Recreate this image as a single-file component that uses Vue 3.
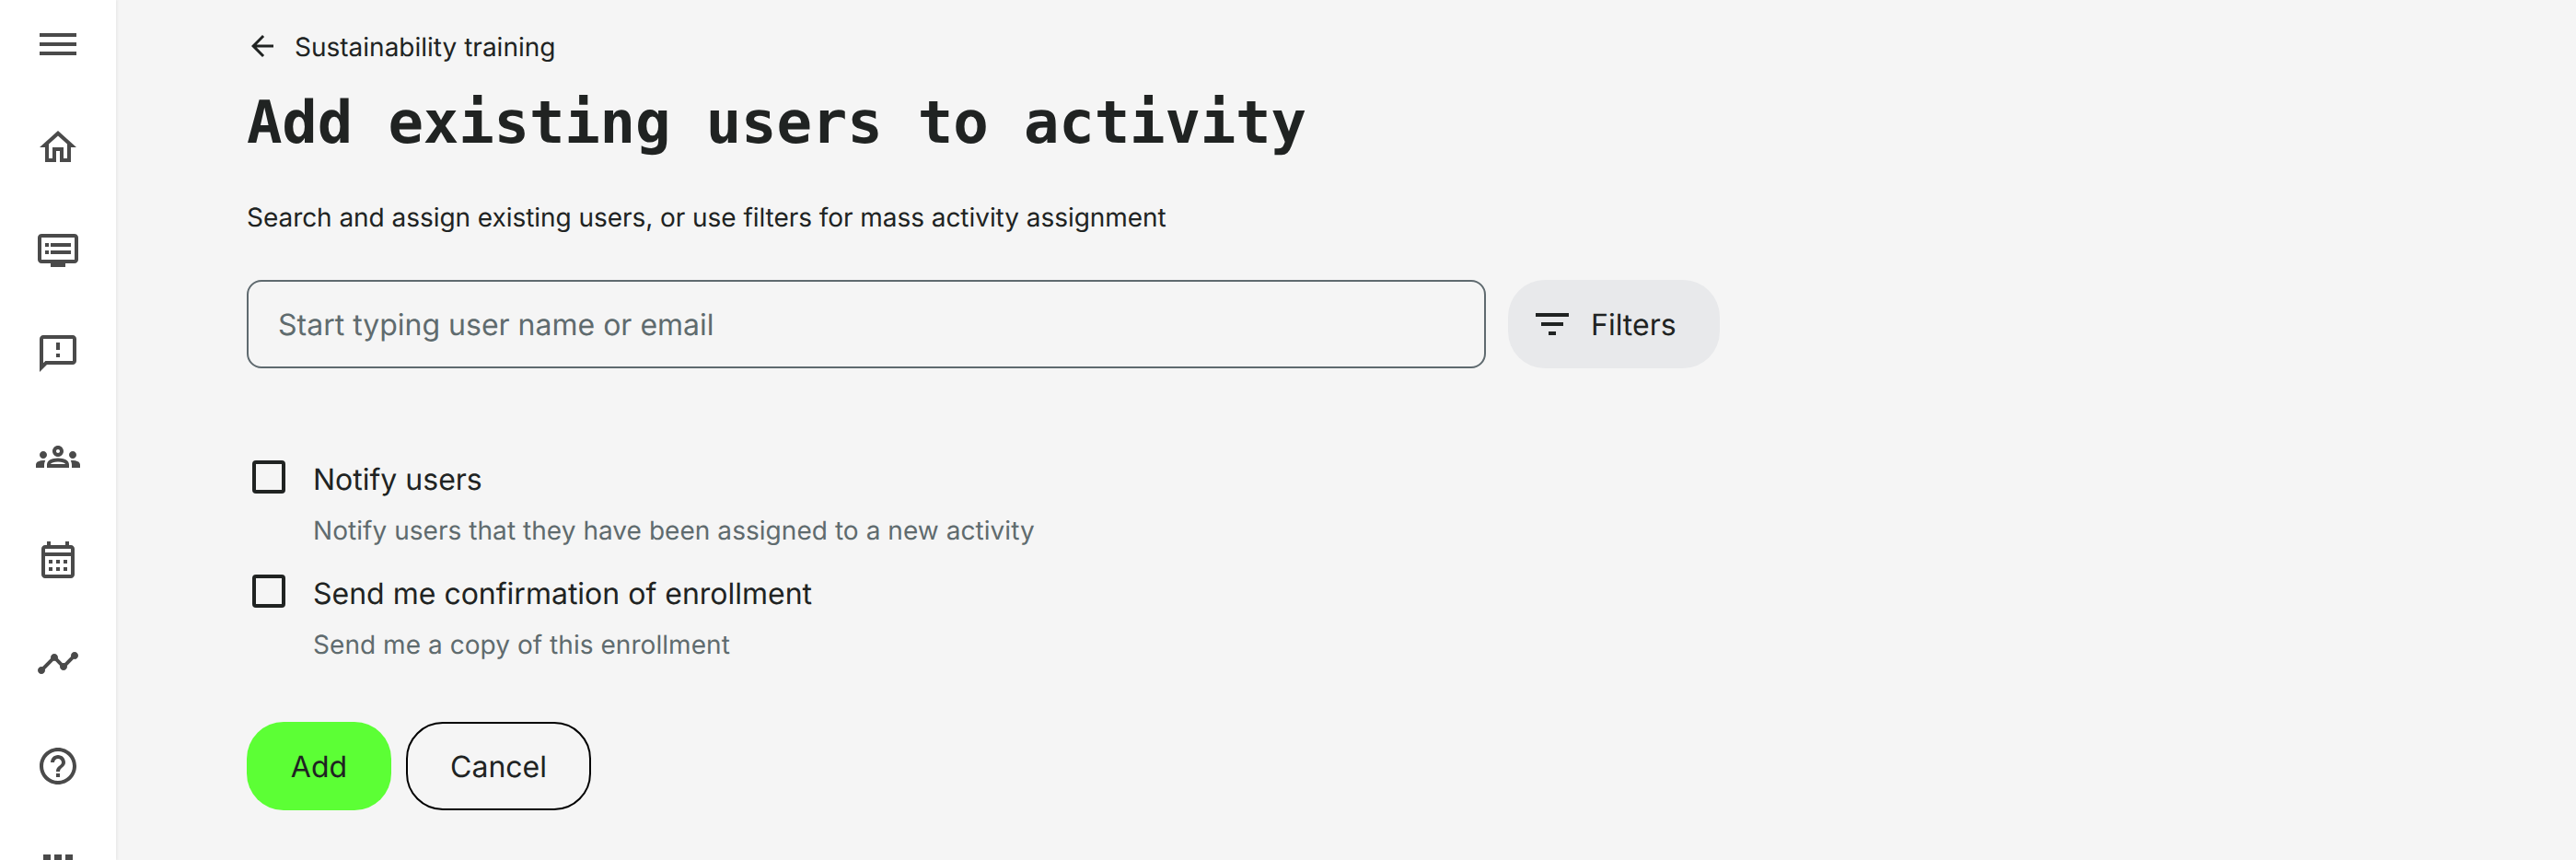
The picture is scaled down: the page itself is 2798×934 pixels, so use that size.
<script setup>
const navIcons = [
  'M2 6h20v2H2V6zm0 5h20v2H2v-2zm0 5h20v2H2v-2z',
  'M12 5.69l5 4.5V18h-2v-6H9v6H7v-7.81l5-4.5M12 3L2 12h3v8h6v-6h2v6h6v-8h3L12 3z',
  'M21 3H3c-1.1 0-2 .9-2 2v12c0 1.1.9 2 2 2h5v2h8v-2h5c1.1 0 2-.9 2-2V5c0-1.1-.9-2-2-2zm0 14H3V5h18v12zm-2-9H8v2h11V8zm0 4H8v2h11v-2zM7 8H5v2h2V8zm0 4H5v2h2v-2z',
  'M20 2H4c-1.1 0-1.99.9-1.99 2L2 22l4-4h14c1.1 0 2-.9 2-2V4c0-1.1-.9-2-2-2zm0 14H5.17L4 17.17V4h16v12zm-9-4h2v2h-2zm0-6h2v4h-2z',
  'M4 13c1.1 0 2-.9 2-2s-.9-2-2-2-2 .9-2 2 .9 2 2 2zm1.13 1.1c-.37-.06-.74-.1-1.13-.1-.99 0-1.93.21-2.78.58C.48 14.9 0 15.62 0 16.43V18h4.5v-1.61c0-.83.23-1.61.63-2.29zM20 13c1.1 0 2-.9 2-2s-.9-2-2-2-2 .9-2 2 .9 2 2 2zm4 3.43c0-.81-.48-1.53-1.22-1.85-.85-.37-1.79-.58-2.78-.58-.39 0-.76.04-1.13.1.4.68.63 1.46.63 2.29V18H24v-1.57zm-7.76-2.78c-1.17-.52-2.61-.9-4.24-.9-1.63 0-3.07.39-4.24.9C6.68 14.13 6 15.21 6 16.39V18h12v-1.61c0-1.18-.68-2.26-1.76-2.74zM8.07 16c.09-.23.13-.39.91-.69.97-.38 1.99-.56 3.02-.56s2.05.18 3.02.56c.77.3.81.46.91.69H8.07zM12 8c.55 0 1 .45 1 1s-.45 1-1 1-1-.45-1-1 .45-1 1-1m0-2c-1.66 0-3 1.34-3 3s1.34 3 3 3 3-1.34 3-3-1.34-3-3-3z',
  'M19 4h-1V2h-2v2H8V2H6v2H5c-1.1 0-2 .9-2 2v14c0 1.1.9 2 2 2h14c1.1 0 2-.9 2-2V6c0-1.1-.9-2-2-2zm0 16H5V10h14v10zm0-12H5V6h14v2zM9 14H7v-2h2v2zm4 0h-2v-2h2v2zm4 0h-2v-2h2v2zm-8 4H7v-2h2v2zm4 0h-2v-2h2v2zm4 0h-2v-2h2v2z',
  'M23 8c0 1.1-.9 2-2 2-.18 0-.35-.02-.51-.07l-3.56 3.55c.05.16.07.34.07.52 0 1.1-.9 2-2 2s-2-.9-2-2c0-.18.02-.36.07-.52l-2.55-2.55c-.16.05-.34.07-.52.07s-.36-.02-.52-.07l-4.55 4.56c.05.16.07.33.07.51 0 1.1-.9 2-2 2s-2-.9-2-2 .9-2 2-2c.18 0 .35.02.51.07l4.56-4.55C8.02 9.36 8 9.18 8 9c0-1.1.9-2 2-2s2 .9 2 2c0 .18-.02.36-.07.52l2.55 2.55c.16-.05.34-.07.52-.07s.36.02.52.07l3.55-3.56C19.02 8.35 19 8.18 19 8c0-1.1.9-2 2-2s2 .9 2 2z',
  'M11 18h2v-2h-2v2zm1-16C6.48 2 2 6.48 2 12s4.48 10 10 10 10-4.48 10-10S17.52 2 12 2zm0 18c-4.41 0-8-3.59-8-8s3.59-8 8-8 8 3.59 8 8-3.59 8-8 8zm0-14c-2.21 0-4 1.79-4 4h2c0-1.1.9-2 2-2s2 .9 2 2c0 2-3 1.75-3 5h2c0-2.25 3-2.5 3-5 0-2.21-1.79-4-4-4z',
  'M4 8h4V4H4v4zm6 12h4v-4h-4v4zm-6 0h4v-4H4v4zm0-6h4v-4H4v4zm6 0h4v-4h-4v4zm6-10v4h4V4h-4zm-6 4h4V4h-4v4zm6 6h4v-4h-4v4zm0 6h4v-4h-4v4z',
];

const options = [
  { label: 'Notify users', hint: 'Notify users that they have been assigned to a new activity' },
  { label: 'Send me confirmation of enrollment', hint: 'Send me a copy of this enrollment' },
];
</script>

<template>
  <div class="page">
    <nav class="sidebar">
      <svg v-for="icon in navIcons" :key="icon" class="nav-icon" viewBox="0 0 24 24">
        <path :d="icon" />
      </svg>
    </nav>

    <main class="content">
      <div class="breadcrumb">
        <svg class="back-icon" viewBox="0 0 24 24">
          <path d="M20 11H7.83l5.59-5.59L12 4l-8 8 8 8 1.41-1.41L7.83 13H20v-2z" />
        </svg>
        <span>Sustainability training</span>
      </div>

      <h1 class="title">Add existing users to activity</h1>
      <p class="description">Search and assign existing users, or use filters for mass activity assignment</p>

      <div class="search-row">
        <input class="search" type="text" placeholder="Start typing user name or email" />
        <button class="filters-btn">
          <svg class="filter-icon" viewBox="0 0 24 24">
            <path d="M10 18h4v-2h-4v2zM3 6v2h18V6H3zm3 7h12v-2H6v2z" />
          </svg>
          Filters
        </button>
      </div>

      <div class="options">
        <div v-for="option in options" :key="option.label" class="option">
          <span class="checkbox"></span>
          <div class="option-text">
            <div class="option-label">{{ option.label }}</div>
            <div class="option-hint">{{ option.hint }}</div>
          </div>
        </div>
      </div>

      <div class="actions">
        <button class="btn btn-add">Add</button>
        <button class="btn btn-cancel">Cancel</button>
      </div>
    </main>
  </div>
</template>

<style>
html,
body {
  margin: 0;
  background: #f5f5f5;
}
</style>

<style scoped>
.page {
  display: flex;
  width: 2798px;
  height: 934px;
  overflow: hidden;
  background: #f5f5f5;
  font-family: Inter, "Liberation Sans", sans-serif;
  color: #202322;
  text-rendering: geometricPrecision;
}

.sidebar {
  display: flex;
  flex-direction: column;
  align-items: center;
  flex: none;
  gap: 64px;
  box-sizing: border-box;
  width: 126px;
  height: 934px;
  padding-top: 24px;
  background: #fff;
  box-shadow: 2px 0 2px rgba(0, 0, 0, 0.04);
}

.nav-icon {
  flex: none;
  width: 48px;
  height: 48px;
  fill: #4a4a4a;
}

.content {
  flex: 1;
  padding-left: 142px;
}

.breadcrumb {
  display: flex;
  align-items: center;
  height: 36px;
  margin-top: 33px;
  font-size: 28px;
}

.back-icon {
  width: 36px;
  height: 36px;
  margin: -2px 17px 0 -1px;
  fill: #202322;
}

.title {
  margin: 27px 0 0;
  font-family: "DejaVu Sans Mono", "Liberation Mono", monospace;
  font-size: 64px;
  font-weight: 700;
  line-height: 76px;
  letter-spacing: -0.17px;
}

.description {
  margin: 44px 0 0;
  font-size: 28px;
  line-height: 40px;
  letter-spacing: -0.05px;
}

.search-row {
  display: flex;
  gap: 24px;
  margin-top: 48px;
}

.search {
  box-sizing: border-box;
  width: 1346px;
  height: 96px;
  padding: 0 32px;
  background: transparent;
  border: 2px solid #5f6a6f;
  border-radius: 16px;
  font-family: inherit;
  font-size: 32px;
  color: #202322;
  outline: none;
  text-rendering: geometricPrecision;
}

.search::placeholder {
  color: #5f6b6e;
  opacity: 1;
}

.filters-btn {
  display: flex;
  align-items: center;
  gap: 18px;
  box-sizing: border-box;
  width: 230px;
  height: 96px;
  padding: 0 24px;
  background: #e8e9eb;
  border: none;
  border-radius: 40px;
  font-family: inherit;
  font-size: 32px;
  color: #202322;
  text-rendering: geometricPrecision;
}

.filter-icon {
  width: 48px;
  height: 48px;
  fill: #202322;
}

.options {
  display: flex;
  flex-direction: column;
  gap: 26px;
  margin-top: 98px;
}

.option {
  display: flex;
  gap: 30px;
}

.checkbox {
  flex: none;
  box-sizing: border-box;
  width: 36px;
  height: 36px;
  margin: 2px 0 0 6px;
  border: 4px solid #202322;
  border-radius: 4px;
}

.option-text {
  padding-top: 1px;
}

.option-label {
  font-size: 32px;
  line-height: 44px;
}

.option-hint {
  margin-top: 13px;
  font-size: 28px;
  line-height: 40px;
  letter-spacing: 0.05px;
  color: #5f6b6e;
}

.actions {
  display: flex;
  gap: 16px;
  margin-top: 64px;
}

.btn {
  box-sizing: border-box;
  height: 96px;
  border-radius: 40px;
  font-family: inherit;
  font-size: 32px;
  color: #202322;
  text-rendering: geometricPrecision;
}

.btn-add {
  width: 157px;
  background: #5cff35;
  border: none;
}

.btn-cancel {
  width: 201px;
  background: transparent;
  border: 2px solid #000;
}
</style>
